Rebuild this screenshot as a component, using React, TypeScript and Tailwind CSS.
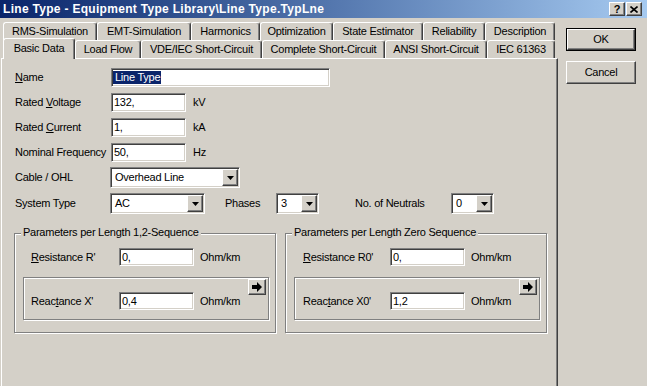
import React from "react";

const raised =
  "border border-t-white border-l-white border-r-[#404040] border-b-[#404040] shadow-[inset_-1px_-1px_0_#808080] bg-[#d4d0c8]";
const sunken =
  "border border-t-[#808080] border-l-[#808080] border-r-white border-b-white shadow-[inset_1px_1px_0_#404040,inset_-1px_-1px_0_#d4d0c8]";
const etched = "border border-[#808080] shadow-[inset_1px_1px_0_#fff,1px_1px_0_#fff]";
const tabBase =
  "flex items-center justify-center whitespace-nowrap bg-[#d4d0c8] border-t border-l border-r border-t-white border-l-white border-r-[#404040] shadow-[inset_-1px_0_0_#808080] rounded-t-[3px]";

function Edit({ className, children }: { className: string; children: React.ReactNode }) {
  return <div className={`${className} bg-white ${sunken} flex items-center leading-[13px]`}>{children}</div>;
}

function Combo({ className, value }: { className: string; value: string }) {
  return (
    <div className={`${className} h-[21px] bg-white ${sunken} p-[1px] flex`}>
      <div className="flex-1 flex items-center pl-[3px]">{value}</div>
      <div className={`w-[16px] ${raised} flex items-center justify-center`}>
        <svg width="7" height="4" viewBox="0 0 7 4">
          <path d="M0 0h7L3.5 4z" fill="#000" />
        </svg>
      </div>
    </div>
  );
}

function ArrowBtn() {
  return (
    <div className={`ml-auto mt-[1px] mr-[2px] w-[18px] h-[16px] ${raised} flex items-center justify-center`}>
      <svg width="10" height="10" viewBox="0 0 10 10">
        <path d="M0 3h5V0l5 5-5 5V7H0z" fill="#000" />
      </svg>
    </div>
  );
}

function Group({
  title,
  rLabel,
  rVal,
  xLabel,
  xVal,
  lblW,
  rowPad,
  innerPad,
}: {
  title: string;
  rLabel: React.ReactNode;
  rVal: string;
  xLabel: React.ReactNode;
  xVal: string;
  lblW: string;
  rowPad: string;
  innerPad: string;
}) {
  return (
    <div className={`relative w-[262px] h-[100px] ${etched} pl-[8px] pt-[14px]`}>
      <span className="absolute left-[6px] top-[-8px] px-[2px] bg-[#d4d0c8] leading-[13px] whitespace-nowrap">
        {title}
      </span>
      <div className={`flex items-center h-[18px] ${rowPad}`}>
        <div className={`${lblW} whitespace-nowrap`}>{rLabel}</div>
        <Edit className="w-[75px] h-[18px]">
          <span className="pl-[2px]">{rVal}</span>
        </Edit>
        <span className="ml-[6px]">Ohm/km</span>
      </div>
      <div className={`mt-[11px] w-[246px] h-[43px] ${etched} flex items-start`}>
        <div className={`flex items-center h-[18px] mt-[14px] ${innerPad}`}>
          <div className={`${lblW} whitespace-nowrap`}>{xLabel}</div>
          <Edit className="w-[75px] h-[18px]">
            <span className="pl-[2px]">{xVal}</span>
          </Edit>
          <span className="ml-[6px]">Ohm/km</span>
        </div>
        <ArrowBtn />
      </div>
    </div>
  );
}

export default function App() {
  const row1: [string, string][] = [
    ["RMS-Simulation", "w-[94px]"],
    ["EMT-Simulation", "w-[94px]"],
    ["Harmonics", "w-[69px]"],
    ["Optimization", "w-[73px]"],
    ["State Estimator", "w-[90px]"],
    ["Reliability", "w-[62px]"],
    ["Description", "w-[70px]"],
  ];
  const row2: [string, string][] = [
    ["Load Flow", "w-[66px]"],
    ["VDE/IEC Short-Circuit", "w-[121px]"],
    ["Complete Short-Circuit", "w-[123px]"],
    ["ANSI Short-Circuit", "w-[102px]"],
    ["IEC 61363", "w-[68px]"],
  ];

  return (
    <div className="w-[647px] h-[386px] overflow-hidden bg-[#d4d0c8] text-black text-[11px] tracking-[-0.25px] font-['Liberation_Sans',Arial,sans-serif]">
      {/* Title bar */}
      <div className="h-[18px] flex items-center bg-linear-to-r from-[#0a246a] to-[#a6caf0] pl-[3px] pr-[5px]">
        <span className="flex-1 text-white font-bold text-[12px] tracking-[0.3px] whitespace-nowrap">
          Line Type - Equipment Type Library\Line Type.TypLne
        </span>
        <div className={`w-[16px] h-[14px] ${raised} flex items-center justify-center font-bold leading-none tracking-normal`}>?</div>
        <div className={`ml-[1px] w-[16px] h-[14px] ${raised} flex items-center justify-center`}>
          <svg width="8" height="7" viewBox="0 0 8 7">
            <path d="M0.5 0.5L7.5 6.5M7.5 0.5L0.5 6.5" stroke="#000" strokeWidth="1.6" />
          </svg>
        </div>
      </div>

      <div className="flex pt-[4px]">
        {/* Tab control */}
        <div className="w-[557px] ml-[1px]">
          <div className="flex pl-[2px] h-[18px]">
            {row1.map(([t, w]) => (
              <div key={t} className={`${tabBase} ${w} h-[18px]`}>
                {t}
              </div>
            ))}
          </div>
          <div className="flex items-end pl-[2px] h-[18px]">
            <div className={`${tabBase} w-[72px] h-[21px] -mb-[1px] relative z-10 pb-[2px]`}>Basic Data</div>
            {row2.map(([t, w]) => (
              <div key={t} className={`${tabBase} ${w} h-[18px]`}>
                {t}
              </div>
            ))}
          </div>
          <div className="h-[330px] bg-[#d4d0c8] border-t border-l border-r border-t-white border-l-white border-r-[#404040] shadow-[inset_-1px_0_0_#808080] pl-[12px] pt-[9px]">
            <div className="pl-[1px]">
              <div className="flex items-center h-[19px]">
                <div className="w-[96px]">
                  <span className="underline">N</span>ame
                </div>
                <Edit className="w-[219px] h-[19px]">
                  <span className="ml-[1px] pl-[2px] pr-[1px] bg-[#0a246a] text-white">Line Type</span>
                </Edit>
              </div>
              <div className="flex items-center h-[19px] mt-[6px]">
                <div className="w-[96px] whitespace-nowrap">
                  Rated <span className="underline">V</span>oltage
                </div>
                <Edit className="w-[75px] h-[19px]">
                  <span className="pl-[2px]">132,</span>
                </Edit>
                <span className="ml-[7px]">kV</span>
              </div>
              <div className="flex items-center h-[19px] mt-[6px]">
                <div className="w-[96px] whitespace-nowrap">
                  Rated <span className="underline">C</span>urrent
                </div>
                <Edit className="w-[75px] h-[19px]">
                  <span className="pl-[2px]">1,</span>
                </Edit>
                <span className="ml-[7px]">kA</span>
              </div>
              <div className="flex items-center h-[19px] mt-[6px]">
                <div className="w-[96px] whitespace-nowrap">Nominal Frequency</div>
                <Edit className="w-[75px] h-[19px]">
                  <span className="pl-[2px]">50,</span>
                </Edit>
                <span className="ml-[7px]">Hz</span>
              </div>
              <div className="flex items-center h-[21px] mt-[5px]">
                <div className="w-[95px] whitespace-nowrap">Cable / OHL</div>
                <Combo className="w-[130px]" value="Overhead Line" />
              </div>
              <div className="flex items-center h-[21px] mt-[5px]">
                <div className="w-[95px] whitespace-nowrap">System Type</div>
                <Combo className="w-[95px]" value="AC" />
                <div className="ml-[20px] w-[51px]">Phases</div>
                <Combo className="w-[43px]" value="3" />
                <div className="ml-[36px] w-[96px] whitespace-nowrap">No. of Neutrals</div>
                <Combo className="w-[43px]" value="0" />
              </div>
            </div>

            <div className="flex mt-[19px] gap-[9px]">
              <Group
                title="Parameters per Length 1,2-Sequence"
                rLabel={
                  <>
                    <span className="underline">R</span>esistance R'
                  </>
                }
                rVal="0,"
                xLabel={
                  <>
                    Reac<span className="underline">t</span>ance X'
                  </>
                }
                xVal="0,4"
                lblW="w-[88px]"
                rowPad="pl-[8px]"
                innerPad="pl-[7px]"
              />
              <Group
                title="Parameters per Length Zero Sequence"
                rLabel={
                  <>
                    <span className="underline">R</span>esistance R0'
                  </>
                }
                rVal="0,"
                xLabel={
                  <>
                    Reac<span className="underline">t</span>ance X0'
                  </>
                }
                xVal="1,2"
                lblW="w-[87px]"
                rowPad="pl-[9px]"
                innerPad="pl-[8px]"
              />
            </div>
          </div>
        </div>

        {/* Buttons */}
        <div className="ml-[8px] pt-[6px] flex flex-col">
          <div className="w-[70px] h-[23px] border border-black">
            <div className={`h-full ${raised} flex items-center justify-center`}>OK</div>
          </div>
          <div className={`mt-[10px] w-[70px] h-[23px] ${raised} flex items-center justify-center`}>Cancel</div>
        </div>
      </div>
    </div>
  );
}
